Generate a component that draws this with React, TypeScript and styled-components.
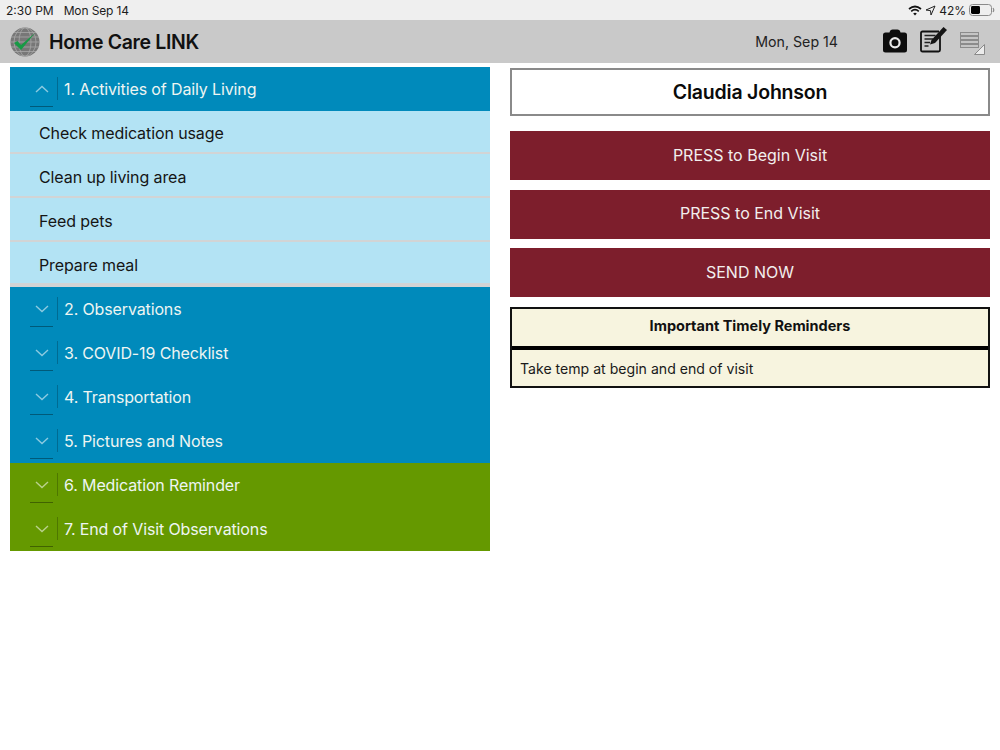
import React from "react";
import styled, { createGlobalStyle } from "styled-components";

const Global = createGlobalStyle`
  html, body { margin: 0; padding: 0; background: #fff; }
  body { font-family: Inter, "Liberation Sans", sans-serif; }
`;

const Page = styled.div`
  width: 1000px;
  height: 750px;
  display: flex;
  flex-direction: column;
  overflow: hidden;
`;

const StatusBar = styled.div`
  height: 20px;
  background: #efefef;
  display: flex;
  align-items: center;
  padding: 0 5px 0 6px;
  font-size: 12px;
  color: #1c1c1c;
`;

const StatusTime = styled.span`
  margin-right: 10px;
`;

const StatusDate = styled.span`
  letter-spacing: -0.01em;
`;

const StatusRight = styled.div`
  margin-left: auto;
  display: flex;
  align-items: center;
  gap: 3px;
`;

const Header = styled.header`
  height: 43px;
  background: #c9c9c9;
  display: flex;
  align-items: center;
  padding: 0 15px 0 10px;
`;

const AppTitle = styled.h1`
  margin: 0 0 0 9px;
  font-size: 19.5px;
  font-weight: 600;
  color: #111;
  letter-spacing: -0.35px;
`;

const HeaderDate = styled.span`
  margin-left: auto;
  margin-right: 44px;
  font-size: 14.2px;
  color: #222;
`;

const HeaderIcons = styled.div`
  display: flex;
  align-items: center;
  gap: 12px;
`;

const Main = styled.main`
  display: grid;
  grid-template-columns: 480px 480px;
  gap: 20px;
  padding: 4px 10px 0;
  align-items: start;
`;

const Accordion = styled.div`
  display: flex;
  flex-direction: column;
`;

const SectionRow = styled.div<{ $color: string }>`
  height: 44px;
  box-sizing: border-box;
  background: ${(p) => p.$color};
  color: #eef5f2;
  display: flex;
  align-items: center;
  font-size: 16px;
  letter-spacing: -0.13px;
`;

const Chevron = styled.div`
  width: 48px;
  height: 100%;
  display: flex;
  align-items: center;
  justify-content: center;
  margin-right: 6px;
  padding-left: 15px;
  box-sizing: border-box;
  position: relative;
  &::before {
    content: "";
    position: absolute;
    right: 0;
    top: 10px;
    height: 23px;
    width: 1px;
    background: rgba(0, 0, 0, 0.22);
  }
  &::after {
    content: "";
    position: absolute;
    left: 20px;
    bottom: 4px;
    width: 23px;
    height: 1px;
    background: rgba(0, 0, 0, 0.35);
  }
`;

const ItemRow = styled.div<{ $last?: boolean }>`
  height: 44px;
  box-sizing: border-box;
  background: ${(p) =>
    p.$last
      ? "linear-gradient(#b3e3f4 0 40px, #d2d4d5 40px 44px)"
      : "linear-gradient(#b3e3f4 0 41px, #d2d4d5 41px 43px, #b3e3f4 43px 44px)"};
  color: #151515;
  display: flex;
  align-items: center;
  padding-left: 29px;
  font-size: 16px;
  letter-spacing: -0.1px;
`;

const Side = styled.div`
  display: flex;
  flex-direction: column;
  margin-top: 1px;
`;

const NameBox = styled.div`
  height: 48px;
  box-sizing: border-box;
  border: 2px solid #8a8a8a;
  background: #fff;
  display: flex;
  align-items: center;
  justify-content: center;
  font-size: 19.5px;
  font-weight: 600;
  letter-spacing: -0.2px;
  color: #0a0a0a;
  margin-bottom: 15px;
`;

const ActionButton = styled.button`
  height: 49px;
  border: 0;
  padding: 0 0 2px;
  background: #7d1e2c;
  color: #f2eeee;
  font-family: inherit;
  font-size: 16px;
  margin-bottom: 9.5px;
`;

const Reminder = styled.div`
  background: #f7f4df;
  border: 2px solid #111;
  display: flex;
  flex-direction: column;
`;

const ReminderTitle = styled.div`
  height: 34px;
  padding-bottom: 3px;
  display: flex;
  align-items: center;
  justify-content: center;
  font-size: 14.5px;
  font-weight: 700;
  color: #111;
  border-bottom: 4px solid #000;
`;

const ReminderBody = styled.div`
  height: 35px;
  padding: 1px 0 0 8px;
  display: flex;
  align-items: center;
  font-size: 14.1px;
  color: #1a1a1a;
`;

const CameraSlot = styled.div`
  display: flex;
  margin-bottom: 2px;
`;

const NotesSlot = styled.div`
  display: flex;
  margin-bottom: 4px;
`;

const ListSlot = styled.div`
  display: flex;
  margin-top: 4px;
`;

const Chev = ({ up }: { up?: boolean }) => (
  <svg width="14" height="8" viewBox="0 0 14 8" fill="none" stroke="rgba(255,255,255,0.55)" strokeWidth="1.4">
    <path d={up ? "M1 7 L7 1.5 L13 7" : "M1 1 L7 6.5 L13 1"} />
  </svg>
);

const Globe = () => (
  <svg width="30" height="30" viewBox="0 0 30 30">
    <circle cx="15" cy="15" r="14.5" fill="#777" />
    <g stroke="#a8a8a8" strokeWidth="0.8" fill="none">
      <ellipse cx="15" cy="15" rx="6" ry="14.3" />
      <ellipse cx="15" cy="15" rx="11" ry="14.3" />
      <path d="M1 10 H29 M0.6 15 H29.4 M1 20 H29 M4 5.5 H26 M4 24.5 H26" />
    </g>
    <path d="M4 16 L7.5 14 L11 18 L25 6 L11 23 Z" fill="#179a45" />
  </svg>
);

const Camera = () => (
  <svg width="26" height="24" viewBox="0 0 26 24">
    <path fill="#0d0d0d" d="M8 2 Q8.5 0.5 10.5 0.5 H15.5 Q17.5 0.5 18 2 L18.5 3.5 H22.5 Q25 3.5 25 6 V21 Q25 23.5 22.5 23.5 H3.5 Q1 23.5 1 21 V6 Q1 3.5 3.5 3.5 H7.5 Z" />
    <circle cx="13" cy="13.8" r="4.6" fill="none" stroke="#e8e8e8" strokeWidth="2.2" />
  </svg>
);

const Notes = () => (
  <svg width="28" height="27" viewBox="0 0 28 27">
    <path d="M20 10 V24 Q20 25.5 18.5 25.5 H2.5 Q1 25.5 1 24 V7 Q1 5.5 2.5 5.5 H19" fill="#c9c9c9" stroke="#111" strokeWidth="1.8" />
    <path d="M4.5 9.5 H15.5 M4.5 13 H13 M4.5 16.5 H10 M4.5 20 H8.5" stroke="#222" strokeWidth="1.5" />
    <path d="M10 18.5 L11.5 14 L23.5 1 L27 4 L15 17 Z" fill="#151515" />
  </svg>
);

const ListCorner = () => (
  <svg width="25" height="23" viewBox="0 0 25 23">
    <g fill="#c4c4c4" stroke="#8b8b8b" strokeWidth="1">
      <rect x="0.5" y="0.5" width="18" height="3" />
      <rect x="0.5" y="4.5" width="18" height="3" />
      <rect x="0.5" y="8.5" width="18" height="3" />
      <rect x="0.5" y="12.5" width="18" height="3" />
    </g>
    <path d="M14.5 22.5 L24.5 12.5 V22.5 Z" fill="#ececec" stroke="#8a8a8a" strokeWidth="1" />
  </svg>
);

const Wifi = () => (
  <svg width="14" height="11" viewBox="0 0 14 11" fill="none" stroke="#111" strokeWidth="1.7">
    <path d="M1 4 Q7 -1 13 4" />
    <path d="M3.2 6.3 Q7 3 10.8 6.3" />
    <path d="M7 10.5 L5.2 8.4 Q7 7 8.8 8.4 Z" fill="#111" stroke="none" />
  </svg>
);

const Arrow = () => (
  <svg width="11" height="11" viewBox="0 0 11 11" fill="none" stroke="#222" strokeWidth="1">
    <path d="M10 1 L1 5 L5.5 5.7 L6 10 Z" />
  </svg>
);

const Battery = () => (
  <svg width="26" height="12" viewBox="0 0 26 12">
    <rect x="0.5" y="0.5" width="22" height="11" rx="3" fill="none" stroke="#8a8a8a" />
    <rect x="2" y="2" width="9" height="8" rx="1.4" fill="#000" />
    <path d="M24 4 Q25.5 6 24 8" fill="none" stroke="#8a8a8a" strokeWidth="1.2" />
  </svg>
);

const blue = "#008abb";
const green = "#659900";

export default function App() {
  return (
    <Page>
      <Global />
      <StatusBar>
        <StatusTime>2:30 PM</StatusTime>
        <StatusDate>Mon Sep 14</StatusDate>
        <StatusRight>
          <Wifi />
          <Arrow />
          <span>42%</span>
          <Battery />
        </StatusRight>
      </StatusBar>
      <Header>
        <Globe />
        <AppTitle>Home Care LINK</AppTitle>
        <HeaderDate>Mon, Sep 14</HeaderDate>
        <HeaderIcons>
          <CameraSlot><Camera /></CameraSlot>
          <NotesSlot><Notes /></NotesSlot>
          <ListSlot><ListCorner /></ListSlot>
        </HeaderIcons>
      </Header>
      <Main>
        <Accordion>
          <SectionRow $color={blue}>
            <Chevron><Chev up /></Chevron>
            1. Activities of Daily Living
          </SectionRow>
          <ItemRow>Check medication usage</ItemRow>
          <ItemRow>Clean up living area</ItemRow>
          <ItemRow>Feed pets</ItemRow>
          <ItemRow $last>Prepare meal</ItemRow>
          {["2. Observations", "3. COVID-19 Checklist", "4. Transportation", "5. Pictures and Notes"].map((t) => (
            <SectionRow key={t} $color={blue}>
              <Chevron><Chev /></Chevron>
              {t}
            </SectionRow>
          ))}
          {["6. Medication Reminder", "7. End of Visit Observations"].map((t) => (
            <SectionRow key={t} $color={green}>
              <Chevron><Chev /></Chevron>
              {t}
            </SectionRow>
          ))}
        </Accordion>
        <Side>
          <NameBox>Claudia Johnson</NameBox>
          <ActionButton>PRESS to Begin Visit</ActionButton>
          <ActionButton>PRESS to End Visit</ActionButton>
          <ActionButton>SEND NOW</ActionButton>
          <Reminder>
            <ReminderTitle>Important Timely Reminders</ReminderTitle>
            <ReminderBody>Take temp at begin and end of visit</ReminderBody>
          </Reminder>
        </Side>
      </Main>
    </Page>
  );
}
